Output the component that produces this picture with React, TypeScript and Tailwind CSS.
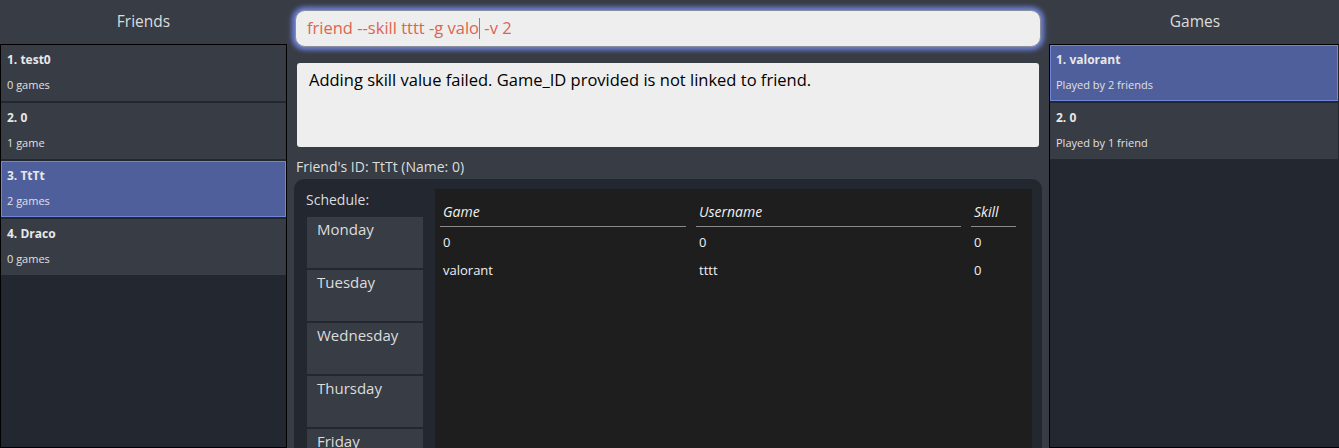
const friends = [
  { id: 1, name: 'test0', count: '0 games' },
  { id: 2, name: '0', count: '1 game' },
  { id: 3, name: 'TtTt', count: '2 games', selected: true },
  { id: 4, name: 'Draco', count: '0 games' },
];

const games = [
  { id: 1, name: 'valorant', count: 'Played by 2 friends', selected: true },
  { id: 2, name: '0', count: 'Played by 1 friend' },
];

const days = ['Monday', 'Tuesday', 'Wednesday', 'Thursday', 'Friday'];

const rows = [
  { game: '0', user: '0', skill: '0' },
  { game: 'valorant', user: 'tttt', skill: '0' },
];

function ListItem({ title, sub, selected }: { title: string; sub: string; selected?: boolean }) {
  return (
    <div
      className={
        'h-[56px] shrink-0 px-[5px] pt-[6px] ' +
        (selected ? 'border border-[#6f86d8] bg-[#4f5f9c]' : 'border border-transparent bg-[#383c45]')
      }
    >
      <div className="text-[12px] font-bold leading-[16px] text-[#e8e8e8]">{title}</div>
      <div className="mt-[10px] text-[11px] leading-[14px] text-[#e0e0e0]">{sub}</div>
    </div>
  );
}

function SidePanel({ title, children, right }: { title: string; children: React.ReactNode; right?: boolean }) {
  return (
    <div className="flex h-full flex-col">
      <div className="flex h-[44px] shrink-0 items-center justify-center text-[15.5px] text-[#dcdcdc]">{title}</div>
      <div className={'flex flex-1 flex-col gap-[2px] border border-black bg-[#232730] ' + (right ? 'pr-[2px]' : '')}>
        {children}
      </div>
    </div>
  );
}

const cell = 'h-[28px] px-[3px] pt-[6px] text-[13px] leading-[18px] text-[#f0f0f0]';

export default function App() {
  return (
    <div
      className="flex h-[448px] w-[1339px] overflow-hidden bg-[#383c45]"
      style={{ fontFamily: '"Open Sans", "Noto Sans", sans-serif' }}
    >
      <div className="w-[287px] shrink-0">
        <SidePanel title="Friends">
          {friends.map((f) => (
            <ListItem key={f.id} title={`${f.id}. ${f.name}`} sub={f.count} selected={f.selected} />
          ))}
        </SidePanel>
      </div>

      <div className="flex w-[762px] shrink-0 flex-col px-[7px] pt-[10px]">
        <div className="mx-[1px] flex h-[37px] shrink-0 items-center whitespace-pre rounded-[10px] border border-[#8a8fa0] bg-[#eeeeee] px-[11px] text-[16.5px] text-[#dc6552] shadow-[0_0_5px_3px_#6f84db]">
          <span>friend --skill tttt -g valo</span>
          <span className="inline-block h-[21px] w-[1px] bg-[#dc6552]" />
          <span> -v 2</span>
        </div>

        <div className="mx-[3px] mt-[16px] h-[84px] shrink-0 rounded-[3px] bg-[#eeeeee] px-[12px] pt-[6px] text-[16.5px] leading-[22px] text-black">
          Adding skill value failed. Game_ID provided is not linked to friend.
        </div>

        <div className="mt-[9px] h-[23px] shrink-0 pl-[2px] text-[14px] leading-[22px] text-[#dcdcdc]">
          Friend's ID: TtTt (Name: 0)
        </div>

        <div className="flex flex-1 gap-[12px] rounded-t-[10px] bg-[#232730] pl-[12px] pr-[10px] pt-[10px]">
          <div className="flex w-[117px] shrink-0 flex-col">
            <div className="h-[28px] shrink-0 pt-[1px] text-[14px] leading-[20px] text-[#dcdcdc]">Schedule:</div>
            <div className="flex flex-col gap-[2px] pl-[1px]">
              {days.map((d) => (
                <div key={d} className="h-[51px] shrink-0 bg-[#383c45] px-[10px] pt-[2px] text-[15px] leading-[20px] text-[#dcdcdc]">
                  {d}
                </div>
              ))}
            </div>
          </div>

          <div className="flex-1 bg-[#1e1e1e] pl-[5px] pt-[12px]">
            <div className="grid grid-cols-[246px_265px_45px] gap-x-[10px]">
              {['Game', 'Username', 'Skill'].map((h) => (
                <div key={h} className="h-[26px] border-b border-[#8a8a8a] px-[3px] text-[14px] italic leading-[22px] text-[#f0f0f0]">
                  {h}
                </div>
              ))}
              {rows.map((r) => [
                <div key={r.game + 'g'} className={cell}>{r.game}</div>,
                <div key={r.game + 'u'} className={cell}>{r.user}</div>,
                <div key={r.game + 's'} className={cell}>{r.skill}</div>,
              ])}
            </div>
          </div>
        </div>
      </div>

      <div className="w-[292px] shrink-0">
        <SidePanel title="Games" right>
          {games.map((g) => (
            <ListItem key={g.id} title={`${g.id}. ${g.name}`} sub={g.count} selected={g.selected} />
          ))}
        </SidePanel>
      </div>
    </div>
  );
}
